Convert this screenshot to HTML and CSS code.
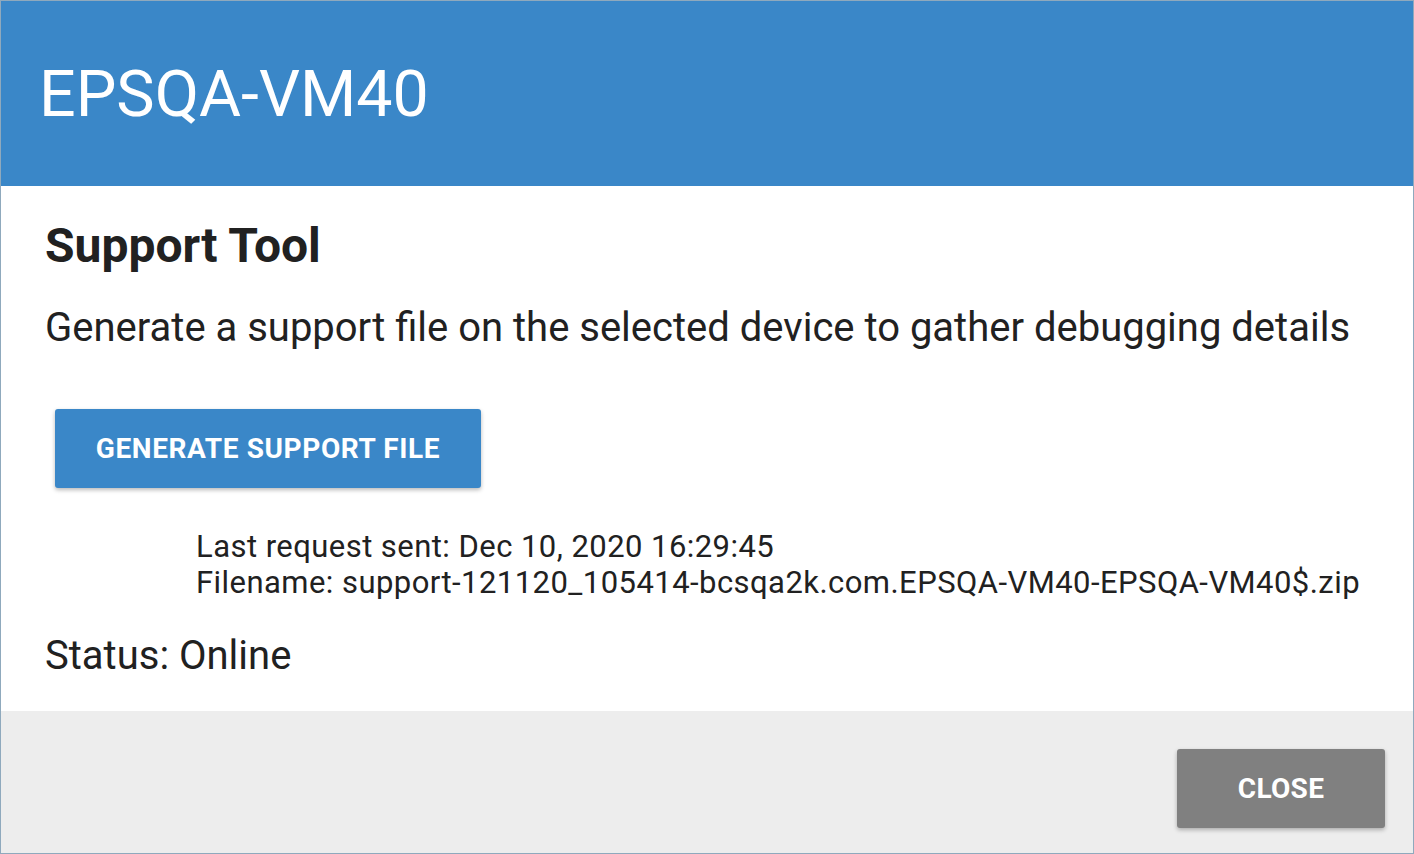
FILE: index.html
```html
<!DOCTYPE html>
<html>
<head>
<meta charset="utf-8">
<link rel="stylesheet" href="styles.css">
</head>
<body>
<div class="dialog">
  <header class="dialog-header">
    <h1 class="dialog-title">EPSQA-VM40</h1>
  </header>
  <main class="dialog-body">
    <h2 class="section-title">Support Tool</h2>
    <p class="description">Generate a support file on the selected device to gather debugging details</p>
    <button class="btn btn-primary">GENERATE SUPPORT FILE</button>
    <div class="request-info">
      <div>Last request sent: Dec 10, 2020 16:29:45</div>
      <div>Filename: support-121120_105414-bcsqa2k.com.EPSQA-VM40-EPSQA-VM40$.zip</div>
    </div>
    <p class="status">Status: Online</p>
  </main>
  <footer class="dialog-footer">
    <button class="btn btn-close">CLOSE</button>
  </footer>
</div>
</body>
</html>
```

FILE: styles.css
```css
* { box-sizing: border-box; }
html, body { margin: 0; padding: 0; }
body {
  font-family: Roboto, "Liberation Sans", sans-serif;
  background: #ffffff;
  color: #212121;
}
.dialog {
  width: 1414px;
  height: 854px;
  border: 1px solid #8fa9bd;
  display: flex;
  flex-direction: column;
}
.dialog-header {
  height: 185px;
  background: #3a87c8;
  display: flex;
  align-items: center;
  padding-left: 38px;
  flex: none;
}
.dialog-title {
  margin: 0;
  font-size: 64.5px;
  font-weight: 400;
  line-height: 66px;
  color: #ffffff;
}
.dialog-body {
  height: 525px;
  flex: none;
  padding: 32px 44px 0 44px;
}
.section-title {
  margin: 0;
  font-size: 48px;
  font-weight: 700;
  line-height: 56px;
}
.description {
  margin: 32px 0 0 0;
  font-size: 40px;
  font-weight: 400;
  line-height: 44px;
  white-space: nowrap;
}
.btn {
  font-family: Roboto, "Liberation Sans", sans-serif;
  border: none;
  border-radius: 3px;
  color: #ffffff;
  font-weight: 700;
  font-size: 28px;
  letter-spacing: 0.3px;
  box-shadow: 0 2px 4px rgba(0,0,0,0.28);
  cursor: pointer;
}
.btn-primary {
  display: block;
  margin: 59px 0 0 10px;
  width: 426px;
  height: 79px;
  background: #3a87c8;
  padding: 0;
  letter-spacing: 0.6px;
}
.request-info {
  margin: 41px 0 0 151px;
  font-size: 31px;
  letter-spacing: 0.45px;
  line-height: 36px;
  color: #212121;
  white-space: nowrap;
}
.status {
  margin: 33px 0 0 0;
  font-size: 40px;
  line-height: 43px;
}
.dialog-footer {
  flex: 1;
  background: #ededed;
  display: flex;
  justify-content: flex-end;
  align-items: flex-start;
  padding: 38px 28px 0 0;
}
.btn-close {
  width: 208px;
  height: 79px;
  background: #808080;
}
```
